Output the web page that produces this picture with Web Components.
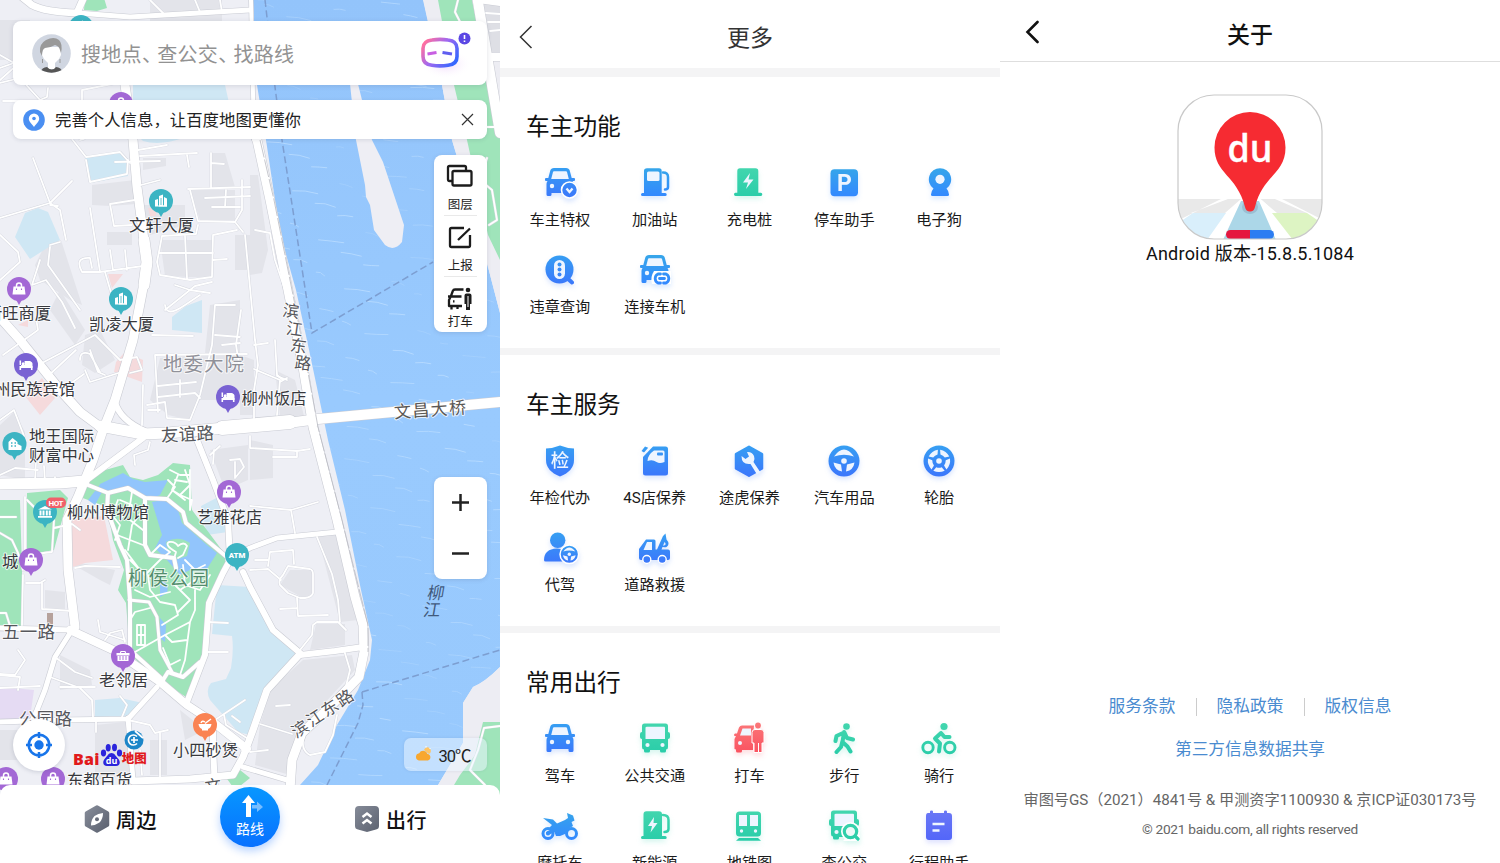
<!DOCTYPE html>
<html lang="zh-CN">
<head>
<meta charset="utf-8">
<title>百度地图</title>
<style>
html,body{margin:0;height:863px;overflow:hidden;background:#fff}
body{display:flex;width:1500px;font-family:Roboto,"Noto Sans CJK SC",sans-serif;color:#111}
</style>
</head>
<body>
<map-screen></map-screen>
<more-screen></more-screen>
<about-screen></about-screen>
<script>
class Base extends HTMLElement{
  constructor(){super();this.attachShadow({mode:'open'});}
  draw(html){this.shadowRoot.innerHTML=html;}
}

/* One line of text spread to a given advance width */
class FitText extends Base{
  connectedCallback(){
    this.draw('<style>:host{display:inline-block;white-space:nowrap}span{display:inline-block}</style><span><slot></slot></span>');
    const s=this.shadowRoot.querySelector('span'),w=+this.getAttribute('w'),n=[...this.textContent].length;
    this.style.width=w+'px';
    s.style.letterSpacing=((w-s.getBoundingClientRect().width)/n)+'px';
  }
}
customElements.define('fit-text',FitText);

/* ---------- map ---------- */
const roads=[
 [7,'M22 -3L32 5Q45 12 77 13L84 -3'],
 [5,'M78 13L130 17L250 10'],
 [9,'M120 60L125 85L133 140L137 187L144 240'],[11,'M144 240L147 262L144 285'],[9,'M144 283L133 340L115 400L103 430L93 460L78 497L67 520L68 570L75 627'],
 [9,'M-5 312L20 340L60 390L80 412L103 429'],
 [11,'M100 426L143 434L167 433L225 428'],[14,'M222 428L290 422'],[10,'M288 423L318 419L500 402'],
 [6,'M115 402Q120 420 145 431'],
 [11,'M-4 484L60 483L84 481'],[6,'M84 482L143 438'],
 [6,'M197 440L213 480L228 520L230 560L223 573L209 603L205 655L187 702'],
 [8,'M70 630L113 650L160 682L187 705L213 722L247 749'],
 [6,'M213 722L213 745L215 790'],
 [5,'M157 687L128 719L60 720L-3 722'],
 [5,'M128 718L133 780'],
 [5,'M72 630L55 657L45 690L37 710L28 730'],
 [5,'M-4 628L40 629L72 630'],
 [9,'M250 120L257 140L270 200L290 300L303 367L313 427L337 520L355 597L363 625L364 652L359 677L333 704L302 733L292 760L290 790'],
 [6,'M243 572L250 587L273 630L300 653'],
 [6,'M300 655L335 651L363 647'],[7,'M300 654L267 690L253 730L243 757L233 775L190 779L133 781'],
 [5,'M243 767L287 780'],[5,'M228 560L250 548L277 538L337 532'],
 [10,'M477 -4L500 133'],[6,'M495 -4L478 0L500 3'],[8,'M488 57L504 57'],
 [4,'M251 0L254 140'],
 [4,'M88 485L108 493L128 488L145 498L167 499L183 512L186 523L228 558'],
 [4,'M108 493L107 510L120 545L127 560L130 600L130 650L163 680'],
 [4,'M145 498L145 545L150 555L174 558L176 568'],[4,'M163 680L168 672L183 677L200 662'],
 [3,'M129 600L149 602L157 617L160 650L172 672']
];
const lanes=[
 'M0 68L14 63L0 55','M0 83L20 78L40 100L47 97L48 88','M3 101L40 101M0 80L18 64','M82 100L82 90L122 82M100 40L110 70L85 72',
 'M150 0L165 15L250 10M195 0L200 12M220 0L222 12',
 'M72 139L86 157L120 152L130 163M86 160L90 182L127 174L128 160M115 162L160 161M138 150L167 145M140 156L197 153M187 155L189 167M141 185L160 180',
 'M33 158L50 203L72 181M0 218L50 203L60 210L66 240M50 205L58 206',
 'M211 153L211 187M211 163L224 164M188 189L250 187M190 190L198 221L235 222L242 210L242 180M205 198L250 196M212 207L240 207M226 190L225 207M235 222L243 232M198 225L196 234L162 236L157 262L160 275L190 280L212 277L213 235L237 230M185 236L187 278M160 253L213 253M213 260L227 259',
 'M110 204L135 200M110 204L114 226L132 225M90 208L100 272L143 266M110 250L113 270M125 250L127 270M100 272L82 272Q74 257 90 258L92 268M105 272L112 296L118 300',
 'M0 235L18 252L20 262L0 280M50 245L60 242M40 260L32 285L46 280L62 302L75 328M50 247L48 265L80 310',
 'M3 355L38 330L36 318M48 376L76 350M42 363L95 335L120 360L137 357L142 370L130 373M80 360Q80 350 90 354L100 372M85 370L90 382L128 370M70 384L84 374M90 350L98 372L105 375',
 'M152 335L193 336M165 310L195 286L212 282M175 285L190 290L210 293M165 305Q166 318 185 305L200 295',
 'M155 355L247 354M155 355L158 412M158 397L195 393L200 398M143 385L142 425M147 405L165 402L167 418L190 420L200 395L212 345L215 305L235 305M222 345L240 343M158 386L196 382M180 380L180 397M215 335L240 337M148 410L160 410M240 370L236 345L241 310',
 'M0 420L14 410L24 436M35 482L36 460M45 482L44 466M0 475L15 468L38 470M55 482L55 477',
 'M135 465L134 455L148 450L150 442M210 455L220 446M230 460L240 459L244 467L235 478L235 462M213 464L214 450',
 'M0 517L16 517M0 533L12 540L18 553L23 570M25 497L25 570M27 500L34 507M27 555L52 552L54 520M54 528L72 524L80 530',
 'M23 575L22 625M0 613L6 613L10 626M42 583L42 609L72 611M26 583L40 583L45 580M75 568L85 566L120 567M98 620L100 632L125 640M105 640L110 633L122 630L125 642',
 'M0 675L20 677L18 690M18 650L25 660L15 675L0 674M0 688L40 686M50 677L80 688L92 700L93 717M55 657L75 672L92 678M60 687L95 687M96 720L96 732M122 717L127 705L120 696M128 720L150 725L155 733L168 730',
 'M42 750L60 750L58 732M140 750L142 775M160 780L160 733',
 'M208 622L228 623M208 652L228 652M215 720L245 700M224 715L226 725L250 740L242 750M232 716L240 722',
 'M250 506L291 510L318 502M291 510L295 533M254 418L254 390L258 365L255 340M275 340L277 375L283 380M280 382L287 378M277 415L280 380L254 369',
 'M250 436L250 448L297 451L310 449M297 451L297 457L273 457M250 570L268 569L281 580M268 566L270 552L293 550L294 564M255 560L268 560M288 566L310 569Q313 570 313 574V593Q312 597 305 598L300 598L288 593L280 585Q278 580 283 575ZM297 598L298 616L328 615M297 608L280 609M317 537L332 574L338 600L340 622M300 650L312 635L313 625L317 622L338 622L346 630M276 706L290 705M260 724L292 734M250 752L268 750M344 650L350 670L345 690',
 'M255 230L270 233L275 260L285 290M254 345L268 343M277 376L287 380M245 235L255 340',
 'M458 0L455 12L478 57L486 78M487 158L480 180L492 190L497 220L489 225M486 127L500 127M500 726L484 728L478 750L470 770L485 785',
 'M486 13L500 14M488 22L500 22M490 31L500 30',
 'M304 735Q300 750 310 755L325 752L333 735L337 715',
 'M80 140L84 139M150 130L200 135'
];
const parkLanes=[
 'M118 500L112 515L120 525L115 540M120 500L132 505L130 520L143 530M132 492L130 505L120 520M143 510L132 525L128 550M117 535L143 545M125 550L140 570L138 585M130 560L145 575L160 560M150 555L160 545L170 552L160 560',
 'M170 470L180 475L190 475M168 480L175 487L168 497M178 475L172 490L180 495L190 485L185 470M180 495L192 500L190 510M172 490L185 500M175 480L187 482M190 470L190 510',
 'M148 575L150 590L160 602L175 605L178 615L162 625M135 590L150 597L170 592M175 585L190 600L178 612M180 590L195 580M183 565L185 585L200 590L210 575M195 590L195 610L190 622L165 635L135 652M190 622L185 660L180 675M130 620L135 612L150 608M165 635L172 642L187 640M163 648L170 665L180 660M185 560L195 570L205 565',
 'M137 625L145 625L145 645L137 645ZM141 625V645M137 635H145',
 'M174 559L176 552Q164 545 169 542Q175 541 178 546Q184 541 187 546L183 555L178 558'
];
const pinArt={
 building:'<path d="M-6 5V-1l3-1v7zM-2 5V-5l4-1.5V5zM3 5V-4l3 1.500V5z"/><path d="M-2 5h8M-6 5h12" stroke="#fff"/><path d="M0 -3v7" stroke="#3cb4c3" stroke-width=".8"/>',
 bag:'<path d="M-5.500 -2.500h11l1 8h-13z"/><path d="M-2.500 -2v-1.500a2.500 2.500 0 0 1 5 0V-2" fill="none" stroke="#fff" stroke-width="1.500"/><path d="M-2.500 -.5v1.500M2.500 -.5v1.500" stroke="#a368d5" stroke-width="1.100"/>',
 bed:'<path d="M-6.500 -4.500h1.600v5.500h10v-3.500q0-1.500-1.500-1.500h-5v4h-5zm0 5.500h13v4h-1.600v-2h-9.800v2h-1.600z"/><circle cx="-2.800" cy="-1.200" r="1.500"/><path d="M-1 -3.500H4Q6.500 -3.500 6.500 -1V3H-1Z"/>',
 house:'<path d="M-6 -2l4-4 5 4v2l4 2v4h-13z"/><path d="M-3.500 -1h1.500m2 0h1.500M-3.500 2h1.500m2 0h1.500" stroke="#3cb4c3" stroke-width="1.600"/>',
 museum:'<path d="M-7 -2.500L0 -6l7 3.500zM-5.500 -1.500h2v5h-2zM-2.500 -1.500h2v5h-2zM.8 -1.500h2v5h-2zM3.700 -1.500h2v5h-2zM-7 4h14v1.700h-14z"/>',
 atm:'<text y="2.900" font-size="7.800" font-weight="900" text-anchor="middle" font-family="Roboto">ATM</text>',
 basket:'<path d="M-6.500 -3h13v2.500h-13zM-5.500 0h11v5h-11z"/><path d="M-3 0v4M0 0v4M3 0v4" stroke="#a368d5" stroke-width=".9"/><path d="M-3 -2l1-2.500h4l1 2.500" fill="none" stroke="#fff" stroke-width="1.100"/>',
 bowl:'<path d="M-6.500 -1h13q-.5 4-3.500 5v1.500h-6V4q-3-1-3.500-5z"/><path d="M0 -1.500L6 -6M-4 -2q1-3 4-1" stroke="#fff" stroke-width="1.500" fill="none"/>'
};
const pins=[[81,27,'#3cb4c3','building'],[121,104,'#a368d5','bag'],[161,201,'#3cb4c3','building'],[19,289,'#a368d5','bag'],[121,299,'#3cb4c3','building'],[26,365,'#7962d3','bed'],[228,397,'#7962d3','bed'],[14.500,444,'#3cb4c3','house'],[45,512,'#3cb4c3','museum'],[31,560,'#a368d5','bag'],[229,492,'#a368d5','bag'],[237,555,'#3cb4c3','atm'],[123,656,'#a368d5','basket'],[205,725,'#fa8353','bowl'],[6,779,'#a368d5','bag'],[53,779,'#a368d5','bag']];
/* text, left, centre y, width, size, colour, rotation */
const labels=[
 ['文轩大厦',129,225,65],['凯凌大厦',89,324,65],['新旺商厦',-14,313,65],['柳州民族宾馆',-22,389,97],['柳州饭店',241.500,398,65],
 ['地委大院',163,364,81,19.500,'#909199'],['地王国际',29,436,65],['财富中心',29,455,65],['友谊路',161,434,53,17.500,'#56575c',-3],
 ['柳州博物馆',67,511.500,82],['艺雅花店',197,517,65],['柳侯公园',128,578,81,19.500,'#538d6d'],['城',2,561,16],
 ['五一路',2,632,53,17.500,'#56575c'],['老邻居',99,680,49],['公园路',19,719,53,17.500,'#56575c'],['小四砂煲',173,749.500,65],['东都百货',67,780,65],
 ['文昌大桥',394,409.500,72,17,'#5b5855',-4]
];
const glyphs=[['滨',291,311,8],['江',294.500,329,8],['东',298.500,346,8],['路',303,363,8],['滨',300,729,-33],['江',315,718,-33],['东',330,708,-33],['路',345,698,-33],['文',213,786,-8]];
const river='M253 -2H423L442 85L452 140L470 200L488 267L500 313V667Q485 682 473 687L463 703V743L438 785V800H290L300 785L318 765L337 725L358 690L370 660L372 640L361 590L345 510L328 440L308 345L296 290L280 233L266 140L257 85Z';

class CityMap extends Base{
  connectedCallback(){
    const all=(w,c)=>roads.map(r=>`<path d="${r[1]}" stroke-width="${r[0]+w}"/>`).join('');
    let waves='';
    for(let i=0;i<230;i++){const x=258+(i*73.3)%240,y=(i*41.700)%785,l=8+(i*7)%20;waves+=`<path opacity="${.3+(i%5)*.12}" d="M${x.toFixed(1)} ${y.toFixed(1)}q${l/2} ${(i%3)-1} ${l} ${1+i%4}"/>`;}
    this.draw(`<style>:host{display:block}svg{display:block;font-family:"Noto Sans CJK SC",sans-serif}</style>
<svg width="500" height="800" viewBox="0 0 500 800" fill="none">
<defs><clipPath id="rv"><path d="${river}"/></clipPath><linearGradient id="rg" x1="0" y1="0" x2="0" y2="1"><stop stop-color="#93c4fb"/><stop offset=".5" stop-color="#99cafe"/><stop offset="1" stop-color="#98c9fd"/></linearGradient></defs>
<rect width="500" height="800" fill="#eeeff5"/>
<g fill="#e3e4ea">
<path d="M150 0H222V45H150ZM0 20H30V60H0ZM92 185L135 180L136 204L110 206L92 205ZM143 158L166 158V166L143 170ZM212 153L225 153L235 187L212 187ZM190 190H235V220L200 220ZM140 205L185 205V225L150 235ZM107 232L132 232V245H107ZM160 240H212V278L165 276ZM235 235H250V270H235ZM250 175L258 175L268 250L262 273L250 275ZM45 245L62 243L82 305L70 300L40 280L35 265Z"/>
<path d="M60 290L85 330L75 345L50 310ZM85 335L100 330L115 360L95 373L82 365ZM210 305L240 300V350L240 400L200 400L190 420L168 415L150 400L160 358L205 353ZM0 425L14 412L25 432L25 480L0 475ZM210 450L248 445V480L225 490ZM250 440L273 445L273 478L250 480ZM240 355L254 360V415H240ZM275 370L295 380L305 420L280 415Z"/>
<path d="M45 590L65 592V610L45 608ZM60 655L90 670L92 685L60 690ZM0 730H60V760H0ZM95 725L125 722L130 775L95 780ZM150 740H167V775H150ZM280 585L290 570L312 570V595L303 598ZM318 537L335 533L352 600L358 620L340 622ZM316 624L345 624V645L310 650ZM303 660L352 655L355 670L300 730L290 775L255 765L260 725L270 690ZM180 710L205 730L185 740ZM70 515L74 550L68 560ZM65 560L115 570L110 585L100 580Z"/>
</g>
<g fill="#f5dadc"><path d="M68 520L104 516L113 560L85 563L70 568ZM116 362L125 352L143 360L142 382L114 372ZM25 396L42 378L55 398L40 415ZM108 274L123 274L112 288ZM148 208L156 208V216L150 216ZM18 325L28 320V327Z"/></g>
<path d="M0 687L34 690L30 718L0 720Z" fill="#e5dbf3"/>
<g fill="#cfe7f4"><path d="M85 157L120 153L128 160V176L90 183ZM25 213L38 208L48 212L60 240L30 259L15 237ZM133 85H225L229 103H133ZM140 138H183Q160 146 143 141ZM172 317L186 306L202 300V333L172 330ZM201 506L222 495L228 532L207 535ZM217 585L250 587L275 635L298 655L265 695L250 735L238 732L210 700Q205 690 211 683L226 679L231 668Q234 650 232 636L212 634ZM95 700L120 698L143 703L125 718L95 717Z"/></g>
<g fill="#9fe4ba"><path d="M85 -2H104L107 8L97 11L84 10ZM0 500H20L22 570V628L0 628ZM27 493L60 490L68 498L54 550L27 555ZM90 480L105 470L123 465L130 477L143 480L158 475L173 463L190 465L192 510L227 557L220 580L209 603L202 660L186 697L163 682L130 655L126 603L118 590L124 570L113 540L107 507L80 497ZM225 776L240 770L250 778L235 790Z"/></g>
<g fill="#92c5fc"><path d="M100 484L123 473L133 479L145 482L168 480L160 495L148 500L128 489L110 493L98 488ZM88 500L95 491L102 492L95 505ZM152 502L163 500L177 507L182 523L207 545L217 553L205 572L190 570L180 575L167 560L155 548L162 535ZM160 580Q170 583 167 593L160 597ZM160 618L166 625L165 642L160 638Z"/><path d="M166 542q12-7 24 1l-3 13-12 4q-8-8-9-18z" fill="#9fe4ba"/></g>
<path d="${river}" fill="url(#rg)"/><g stroke="#bcdeff" stroke-width="1" clip-path="url(#rv)">${waves}</g>
<path d="M350 84L358 84L372 140L383 162L404 225L402 242Q394 252 385 245L374 230L370 205L366 197L365 185L356 140Z" fill="#eeeef4"/>
<path d="M423 0L442 85L452 140L470 200L488 267L500 313V0ZM500 667Q485 682 473 687L463 703V743L438 785V800H500Z" fill="#ededf3"/>
<path d="M438 0H472L500 134V260L488 235L467 140L454 85ZM483 722L500 722V800H445L460 775L475 755Z" fill="#9fe4ba"/>
<path d="M480 3H500V52H488Z" fill="#dedfe5"/>
<path d="M265 0L275 87L282 140L312 333L433 262M362 692L500 650M362 692L363 705L358 723L327 785" stroke="#7897c9" stroke-width="1.500" stroke-dasharray="7 3.500" opacity=".85"/>
<g stroke-linejoin="round" stroke-linecap="round">
<g stroke="#d5d7df" stroke-width="2.700">${lanes.map(d=>`<path d="${d}"/>`).join('')}</g>
<g stroke="#c9cbd3">${all(1.100)}</g>
<g stroke="#fff" stroke-width="1.800">${lanes.concat(parkLanes).map(d=>`<path d="${d}"/>`).join('')}</g>
<g stroke="#fff">${all(0)}</g></g>
<path d="M260 140L274 200L294 300L307 367L318 427L342 520L361 597L368 625L368 652" stroke="#b9bac2" stroke-width=".8" stroke-dasharray="18 2"/>
<path d="M47 613h6v13h-6z" fill="#b6a29c"/>
${pins.map(p=>`<g transform="translate(${p[0]} ${p[1]})"><path d="M-4 9L0 16L4 9z" fill="${p[2]}"/><circle r="12" fill="${p[2]}"/><g fill="#fff">${pinArt[p[3]]}</g></g>`).join('')}
<g><circle cx="134" cy="740" r="9.500" fill="#1c86c8"/><path d="M137 736.500a5 5 0 1 0 0 7M134 737v6M131 740h7M135 731l8 7" stroke="#fff" stroke-width="1.700"/><rect x="46" y="497.500" width="20" height="10.500" rx="5" fill="#f0606a"/><text x="48.500" y="505.700" font-size="8" font-weight="700" fill="#fff" textLength="15" font-family="Roboto">HOT</text></g>
<g stroke="#fff" stroke-width="2" stroke-linejoin="round" paint-order="stroke" stroke-opacity=".75" font-weight="400">
${labels.map(([t,x,y,w,s=16.300,c='#37383d',r=0])=>`<text x="${x}" y="${y+s*.37}" font-size="${s}" fill="${c}" ${t.length>1?`textLength="${w}"`:''} transform="rotate(${r} ${x+w/2} ${y})">${t}</text>`).join('')}
${glyphs.map(([t,x,y,r])=>`<text x="${x}" y="${y+6}" font-size="16.500" fill="#55565b" text-anchor="middle" transform="rotate(${r} ${x} ${y})">${t}</text>`).join('')}
</g>
<g font-size="17" fill="#41597c" text-anchor="middle"><text transform="translate(435 599) skewX(-10)">柳</text><text transform="translate(431 616) skewX(-10)">江</text></g>
</svg>`);
  }
}
customElements.define('city-map',CityMap);

class SearchBar extends Base{
  connectedCallback(){this.draw(`<style>
:host{display:flex;align-items:center;height:64px;margin:0 13px;background:#fff;border-radius:8px;box-shadow:0 1px 5px rgba(60,70,100,.16);box-sizing:border-box;padding:0 14px 0 19px;font-size:20px;color:#929292}
.q{margin-left:10px;flex:1;white-space:nowrap;letter-spacing:.3px}i{font-style:normal;font-feature-settings:"halt";margin-right:5px;display:inline-block}
svg{display:block}</style>
<svg width="39" height="39" viewBox="0 0 39 39"><defs><clipPath id="c"><circle cx="19.500" cy="19.500" r="19.300"/></clipPath></defs><g clip-path="url(#c)"><path fill="#d0d6e1" d="M0 0h39v39H0z"/><path fill="#fff" d="M11 13h17l1 8-2 4-4 4v6h-7v-6l-4-4-2-4z"/><path fill="#999" d="M8 18Q7 10 14 6q8-4 13 0 4 4 2 13l-1-3q-1-4-5-5-5 3-10 3-3 1-3 8z"/><path fill="#555" d="M8 39q2-6 7-6 5 5 9 0 5 0 7 6z"/></g><path d="M10.500 25v4M28 25v4" stroke="#999"/></svg>
<span class="q">搜地点<i>、</i>查公交<i>、</i>找路线</span>
<svg width="52" height="54" viewBox="0 0 52 54"><defs><linearGradient id="g" x1="0" y1=".2" x2="1" y2=".8"><stop stop-color="#ff6fa0"/><stop offset=".45" stop-color="#a068f0"/><stop offset="1" stop-color="#3268ff"/></linearGradient><radialGradient id="h"><stop stop-color="#f0d8fb"/><stop offset="1" stop-color="#fff" stop-opacity="0"/></radialGradient></defs><ellipse cx="25" cy="38" rx="26" ry="15" fill="url(#h)"/><path d="M12 14.500Q20 13.300 28 14.500Q37 15.500 37 23V31Q37 39 28 39.800Q20 41 12 39.800Q3 39 3 31V23Q3 15.500 12 14.500Z" transform="translate(-1 -.5)" fill="#fff" stroke="url(#g)" stroke-width="3.600"/><path d="M6.500 28l9-1.500" stroke="#c85fe2" stroke-width="3"/><path d="M21.500 26.500l9.500 1.500" stroke="#605ef0" stroke-width="3"/><circle cx="43.500" cy="12.500" r="6" fill="#5b47e4"/><path d="M43.500 9v4M43.500 14.500v1.600" stroke="#fff" stroke-width="1.600"/></svg>`);}
}
customElements.define('search-bar',SearchBar);

class NoticeBar extends Base{
  connectedCallback(){this.draw(`<style>
:host{display:flex;align-items:center;height:39px;margin:0 13px;background:#fff;border-radius:8px;box-shadow:0 1px 4px rgba(60,70,100,.14);padding:0 13px 0 10px;box-sizing:border-box;font-size:16.400px;color:#222}
.t{margin-left:10px;flex:1;margin-top:-1px}</style>
<svg width="22" height="22"><circle cx="11" cy="11" r="10.800" fill="#4a8ff2"/><path d="M11 4.500a5.200 5.200 0 0 1 5.200 5.200c0 3-3 5-5.200 8.300-2.200-3.300-5.200-5.300-5.200-8.300A5.200 5.200 0 0 1 11 4.500z" fill="#fff"/><circle cx="11" cy="9.500" r="1.800" fill="#4a8ff2"/></svg>
<span class="t"><fit-text w="246">完善个人信息，让百度地图更懂你</fit-text></span>
<svg width="13" height="13"><path d="M1 1l11 11M12 1L1 12" stroke="#333" stroke-width="1.200"/></svg>`);}
}
customElements.define('notice-bar',NoticeBar);

class MapTools extends Base{
  connectedCallback(){this.draw(`<style>
:host{display:block;width:53.500px;height:177px;background:#fff;border-radius:8px;box-shadow:0 1px 4px rgba(60,70,100,.16)}
div{height:60px;margin:0 10px;border-bottom:1px solid #e9e9e9;display:flex;flex-direction:column;align-items:center;padding-top:8px;box-sizing:content-box;height:52px;font-size:12.500px;line-height:18px;color:#222}
div:last-child{border:0}svg{display:block;height:27px;width:28px;margin-bottom:6px;flex:none}.l svg{margin-bottom:1px}
svg{fill:none;stroke:#1c1c1c;stroke-width:2.300;stroke-linejoin:round}</style>
<div><svg viewBox="0 0 28 27"><path d="M6.500 18H3.500Q2 18 2 16.500V4.500Q2 3 3.500 3H18.500Q20 3 20 4.500V7"/><rect x="6.500" y="8" width="19" height="14.500" rx="1.500"/></svg>图层</div>
<div><svg viewBox="0 0 28 27"><path d="M18 4H5.500Q4 4 4 5.500V21.500Q4 23 5.500 23H22.500Q24 23 24 21.500V11M12 16L24 4.500"/></svg>上报</div>
<div class="l"><svg viewBox="0 0 28 27"><path d="M17.500 4.500H9Q7.300 4.500 6.800 6L4.800 11.500H15.500M2 11.500H5M4.500 12L3 15V21H16M5.500 21V24.500M11.500 24V21M7 16.300h1.500"/><path fill="#1c1c1c" stroke="none" d="M18.500 10.500q0-2 2-2h3q2 0 2 2v8.500h-1.500V25h-4v-6h-1.500z"/><circle cx="22" cy="5" r="2.300" fill="#1c1c1c" stroke="none"/><path d="M22 11v11" stroke="#fff" stroke-width="1"/></svg>打车</div>`);}
}
customElements.define('map-tools',MapTools);

class ZoomControl extends Base{
  connectedCallback(){this.draw(`<style>:host{display:grid;grid-template-rows:1fr 1fr;place-items:center;width:53.500px;height:101.500px;background:#fff;border-radius:8px;box-shadow:0 1px 4px rgba(60,70,100,.16)}path{stroke:#222;stroke-width:2.500}</style>
<svg width="17" height="17"><path d="M0 8.500h17M8.500 0v17"/></svg><svg width="17" height="17"><path d="M0 8.500h17"/></svg>`);}
}
customElements.define('zoom-control',ZoomControl);

class MapFooter extends Base{
  connectedCallback(){this.draw(`<style>
:host{display:flex;align-items:flex-end;padding:0 13px 14px;box-sizing:border-box;color:#222}
.loc{width:52px;height:52px;border-radius:50%;background:#fff;box-shadow:0 1px 4px rgba(60,70,100,.2);display:grid;place-items:center}
.logo{display:flex;align-items:flex-end;margin-left:8px;margin-bottom:4px;color:#e11a1c;font-weight:700;height:28px}
.bai{font:800 16px/16px "Open Sans",sans-serif;letter-spacing:.3px}.map{font-size:12.500px;line-height:17px;font-weight:900;margin-left:-1px}
.w{margin-left:auto;width:83px;height:33px;border-radius:7px;background:rgba(235,246,255,.52);display:flex;align-items:center;justify-content:center;gap:7px;font-size:16.500px;box-shadow:0 0 3px rgba(70,90,130,.14);box-sizing:border-box;padding-right:6px}
</style>
<div class="loc"><svg width="28" height="28" viewBox="0 0 28 28" fill="none" stroke="#1875ea" stroke-width="2.500"><circle cx="14" cy="14" r="10.300"/><circle cx="14" cy="14" r="4.700" fill="#1875ea" stroke="none"/><path d="M14 1v6M14 21v6M1 14h6M21 14h6"/></svg></div>
<div class="logo"><span class="bai">Bai</span><svg width="23" height="24" viewBox="0 0 23 24" fill="#2b25dc"><ellipse cx="3.500" cy="10" rx="2.600" ry="3.400"/><ellipse cx="8.200" cy="4.700" rx="2.500" ry="3.700"/><ellipse cx="14.500" cy="4.500" rx="2.500" ry="3.700"/><ellipse cx="19.500" cy="10" rx="2.600" ry="3.400"/><path d="M11.500 10c3 0 4 3 6.500 5.500 3 3 2 7.500-2 7.500H7c-4 0-5-4.500-2-7.500C7.500 13 8.500 10 11.500 10z"/><text x="11.500" y="20.500" font-size="9" text-anchor="middle" fill="#fff" font-family="Open Sans" font-weight="700">du</text></svg><span class="map">地图</span></div>
<div class="w"><svg width="17" height="17" viewBox="0 0 17 17"><path d="M9 4a3.500 3.500 0 1 1 5 4" fill="#ffc566"/><path d="M4 14.500a3.700 3.700 0 0 1 .2-7.300A4.500 4.500 0 0 1 12.500 8a3.300 3.300 0 0 1 .3 6.500z" fill="#f8a72f"/><path d="M11 0v1.500M15.500 2l-1 1" stroke="#fff"/></svg><fit-text w="32">30℃</fit-text></div>`);}
}
customElements.define('map-footer',MapFooter);

class TabBar extends Base{
  connectedCallback(){this.draw(`<style>
:host{display:grid;grid-template-columns:190px 120px 190px;height:78px;background:#fff;border-radius:10px 10px 0 0;font-size:20px;font-weight:500;color:#111}
.t{display:flex;align-items:center;gap:6px;height:68px}.a{padding-left:84px}.b{padding-left:44px}
.go{justify-self:center;margin-top:2px;width:60px;height:60px;border-radius:50%;background:linear-gradient(#0797ff,#0870ff);box-shadow:0 4px 8px rgba(20,110,255,.3);color:#fff;font-size:14px;font-weight:400;display:flex;flex-direction:column;align-items:center;line-height:18px}
svg{flex:none}.go svg{margin-top:8px;margin-bottom:2px}</style>
<div class="t a"><svg width="26" height="28" viewBox="0 0 26 28"><defs><linearGradient id="n" x2="1" y2="1"><stop stop-color="#858b98"/><stop offset="1" stop-color="#5c6270"/></linearGradient></defs><path d="M13 2L23.500 8V20L13 26L2.500 20V8Z" fill="url(#n)" stroke="url(#n)" stroke-width="3.500" stroke-linejoin="round"/><path d="M19 8q0 6-3.500 9.500Q12 20 7 20.500q0-6 3.500-9.500Q14 8.500 19 8z" fill="#fff"/><circle cx="13" cy="14.200" r="2" fill="#686e7b"/></svg><fit-text w="41">周边</fit-text></div>
<div class="go"><svg width="28" height="23" viewBox="0 0 28 23"><path d="M16 10h5V6.500L27 12l-6 5v-3.500h-5z" fill="#76bdff"/><path d="M12.500 0l6.500 8H15v14h-5V8H6z" fill="#fff"/></svg><span>路线</span></div>
<div class="t b"><svg width="26" height="28" viewBox="0 0 26 28"><defs><linearGradient id="n" x2="1" y2="1"><stop stop-color="#858b98"/><stop offset="1" stop-color="#5c6270"/></linearGradient></defs><path d="M5 1h16q4 0 4 4v16q0 3-3 3.500l-9 2.500-9-2.500q-3-.5-3-3.500V5q0-4 4-4z" fill="url(#n)"/><path d="M8.500 12L13 8.500 17.500 12M8.500 18.500L13 15l4.500 3.500" fill="none" stroke="#fff" stroke-width="2.500"/></svg><fit-text w="41">出行</fit-text></div>`);}
}
customElements.define('tab-bar',TabBar);

class MapScreen extends Base{
  connectedCallback(){this.draw(`<style>
:host{display:flex;flex-direction:column;position:relative;width:500px;height:863px;flex:none;overflow:hidden;box-sizing:border-box;padding-top:21px}
city-map{position:absolute;left:0;top:0}
search-bar,notice-bar,map-tools,zoom-control,map-footer,tab-bar{position:relative;flex:none}
notice-bar{margin-top:15px}map-tools{align-self:flex-end;margin:16px 13px 0 0}zoom-control{align-self:flex-end;margin:145px 13px auto 0}</style>
<city-map></city-map><search-bar></search-bar><notice-bar></notice-bar><map-tools></map-tools><zoom-control></zoom-control><map-footer></map-footer><tab-bar></tab-bar>`);}
}
customElements.define('map-screen',MapScreen);

/* ---------- service icons, 36 x 36 ---------- */
const car='<path d="M12 3h12q3 0 3.700 2.600L29.700 13H32q1 0 1 1v1q0 1-1 1.100h-1.500q1 1.400 1 3V29.500q0 1.500-1.500 1.500h-2q-1.500 0-1.500-1.500V28H9.500v1.500Q9.500 31 8 31H6q-1.500 0-1.500-1.500V19q0-1.700 1-3H4q-1-.1-1-1.100v-1q0-1 1-1h2.300L8.300 5.600Q9 3 12 3z"/><path class="h" d="M12 6.200h12q.8 0 1 .8l1.800 7H9.200L11 7q.2-.8 1-.8z"/><circle class="h" cx="10" cy="21" r="2.200"/>';
const spoke='M12.300 8.300q5.700-2.800 11.400 0l-3 3.500q-2.700-1-5.400 0z';
const art={
 perk:car+'<circle cx="27.500" cy="25" r="8" stroke="#fff" stroke-width="1.600"/><path class="s" d="M24.500 23.500l3 3.500 3-3.500"/>',
 fuel:'<path d="M10 3.300h12q2.700 0 2.700 2.700v22h3.500q1.500 0 1.500 1.500T28.200 31H5.500Q4 31 4 29.500T5.500 28H7V6q0-2.700 3-2.700z"/><rect class="h" x="10" y="6.500" width="12.500" height="9.500" rx="1.500"/><path class="l" d="M26 7.500q5 0 5 4.500v10q0 2.500-3 2.500"/>',
 charge:'<path d="M9 3.300h15.500q2.800 0 2.800 2.700v21.700h2.500q1.500 0 1.500 1.600T29.800 31H4.500Q3 31 3 29.300t1.500-1.600h1.800V6q0-2.700 2.700-2.700z"/><path class="h" d="M19 8l-7 9.500h5L15 24l7.500-9.500h-5z"/>',
 park:'<rect x="4.500" y="4.300" width="27.500" height="27" rx="4"/><text class="h" x="18.500" y="26" text-anchor="middle" font-size="23" font-weight="700">P</text>',
 camera:'<path d="M19 3.200a11.200 11.200 0 0 1 6.500 20.300q2 2 2.500 6 .2 1.500-1.500 1.500h-15q-1.700 0-1.500-1.500.5-4 2.500-6A11.200 11.200 0 0 1 19 3.200z"/><circle class="h" cx="19" cy="14.300" r="4.600"/>',
 query:'<circle cx="17.500" cy="17.500" r="14"/><path class="l" d="M24 25l6 5.500" stroke-width="4"/><rect class="h" x="12" y="8" width="11" height="19" rx="5.500"/><circle cx="17.500" cy="12.500" r="2"/><circle cx="17.500" cy="17.500" r="2"/><circle cx="17.500" cy="22.500" r="2"/>',
 link:car+'<path d="M17 19h17v13H15q-2-7 2-13z" style="fill:#fff"/><path d="M23.500 22h-2.500a5 5 0 0 0 0 9h2.500M26.500 22h2.500a5 5 0 0 1 0 9h-2.500M22.500 26.500h5" class="l" stroke-width="2.800"/>',
 inspect:'<path d="M18 2.500q6 2.500 14 3V17q0 11-14 16.500Q4 28 4 17V5.500q8-.5 14-3z"/><text class="h" x="18" y="24" text-anchor="middle" font-size="18.500" font-weight="500">检</text>',
 door:'<path d="M16 3.500h12.500q2.500 0 2.500 2.500v24q0 2.500-2.500 2.500h-20Q6 32.500 6 30V14zM4.500 8L8 3.500l3.200 1.200L7 9.500z"/><path class="h" d="M17 7.500h9q1.500 0 1.500 1.500v10q-5 2-8 0-4-3-9-1 0-6 6.500-10.500z"/><rect x="20" y="9.500" width="6" height="3" rx="1"/>',
 wrench:'<path d="M18 3.800L31 11V25.500L18 32.700 5 25.500V11Z" stroke-width="2.500" stroke="url(#g)" stroke-linejoin="round"/><path class="h" d="M10.500 13l4 3 3.500-2.500-2-4.500q5-.5 7 4 1.200 3-.5 6l7 10.500-3.500 2-6.500-10.500q-9 1-9-8z"/>',
 wheel:'<circle cx="18" cy="18" r="15.500"/><path class="h" d="M8 13.500Q18-.5 28 13.500Q18 10 8 13.500zM7.500 19.500l7.500 2 1 7q-7.500-1.500-8.500-9zM28.500 19.500l-7.500 2-1 7q7.500-1.500 8.500-9z"/><circle class="h" cx="18" cy="18" r="2.800"/>',
 tyre:'<circle cx="18" cy="18" r="15.500"/><g class="h"><circle cx="18" cy="18" r="2.800"/>'+[36,108,180,252,324].map(a=>`<path d="${spoke}" transform="rotate(${a} 18 18)"/>`).join('')+'</g>',
 driver:'<circle cx="15.700" cy="10.300" r="7.700"/><path d="M2 30q0-11 13-11.500 9 0 10 13H3.500Q2 31.500 2 30z"/><g transform="translate(16.500 13.500) scale(.6)"><circle cx="18" cy="18" r="15.500" stroke="#fff" stroke-width="2.500"/><path class="h" d="M8 13.500Q18-.5 28 13.500Q18 10 8 13.500zM7.500 19.500l7.500 2 1 7q-7.500-1.500-8.500-9zM28.500 19.500l-7.500 2-1 7q7.500-1.500 8.500-9z"/><circle class="h" cx="18" cy="18" r="2.800"/></g>',
 tow:'<path d="M9 9.500h8q1.500 0 1.500 1.500v8.500h1.500L26 6l2.500-2.500 1 6q4 4.500 0 7.500-3 1-5-1l2.500-.5q3-1 .5-3.500l-3 7.500H31q2 0 2 2V28q0 2-2 2H4q-2 0-2-2v-9z"/><path class="h" d="M10 12h5v8H6.500z"/><circle cx="9.800" cy="29.500" r="4" stroke="#fff" stroke-width="1.400"/><circle cx="25.200" cy="29.500" r="4" stroke="#fff" stroke-width="1.400"/>',
 car:car+'<circle class="h" cx="26" cy="21" r="2.200"/>',
 bus:'<path d="M7.500 2.500h21q2.500 0 2.500 2.500v6q2 0 2 2v3q0 2-2 2v8q0 2.500-2 2.500V30q0 1.500-1.500 1.500h-3Q23 31.500 23 30v-1H13v1q0 1.500-1.500 1.500h-3Q7 31.500 7 30v-1.500q-2 0-2-2.500v-8q-2 0-2-2v-3q0-2 2-2V5q0-2.500 2.500-2.500z"/><path class="h" d="M10 5.700h17q1 0 1 1V18H8.500V6.700q0-1 1.500-1z"/><circle class="h" cx="10.500" cy="24" r="2.100"/><circle class="h" cx="25.500" cy="24" r="2.100"/>',
 taxi:'<path d="M11 4.500h12L22 16v13H11v1q0 1.500-1.500 1.500h-3Q5 31.500 5 30v-1.500L3.500 28V18l1.500-3H4q-1 0-1-1t1-1.500h2L8 6.500q1-2 3-2z"/><path class="h" d="M11.500 7.500H20v7H9z"/><circle class="h" cx="9" cy="22" r="2"/><circle cx="27" cy="4.500" r="2.900"/><path stroke="#fff" d="M24 8.500h6q3 0 3 3V22h-2v9.500h-3.500V22v9.500H23V22h-2v-10.500q0-3 3-3z"/>',
 walk:'<circle cx="20.500" cy="5.500" r="3.300"/><path class="l" d="M18 11.500L10.500 15 9.500 20M18.500 11.500L21 17l6 1.500M18 11L16.500 21l5 4.500 3 5M16.500 20L15 26l-4.500 5" stroke-width="4"/>',
 bike:'<g class="l"><circle cx="7" cy="26.500" r="5.200" stroke-width="2.900"/><circle cx="28.800" cy="26.500" r="5.200" stroke-width="2.900"/><path d="M20 12l-6 5.500 5 5-1 8M20 12l3.500 4h5" stroke-width="4"/></g><circle cx="23" cy="5.500" r="3.600"/>',
 moto:'<path d="M1 10l10 1.500 4 4 8-3.500 3-2-1-5 6 2.500 1.500 5-3 1.500L31 18l-5 3-3 5-5 2h-4l-2-5-5-3 3-3z"/><g class="l" stroke-width="3"><circle cx="6" cy="25.500" r="5"/><circle cx="29.500" cy="25.500" r="5"/></g><circle cx="6" cy="25.500" r="2"/><path d="M6 25l11-5" class="l" stroke-width="4"/>',
 metro:'<rect x="5" y="3.500" width="25" height="25" rx="3.500"/><path class="h" d="M8 7h8v11H8zM19 7h8v11h-8z"/><circle class="h" cx="10.500" cy="23" r="1.700"/><circle class="h" cx="24.500" cy="23" r="1.700"/><path d="M8 30h19l3 2.800H5z"/>',
 plan:'<path d="M7 5h2V3.500q0-1 1.500-1T12 3.500V5h11V3.500q0-1 1.500-1t1.500 1V5h2q3 0 3 3v21q0 3-3 3H8q-3 0-3-3V8q0-3 2-3z"/><path class="s" d="M11.500 16h12M11.500 22.500h7" stroke-width="2.600"/>'
};
art.power='<path d="M9.500 3.300h12.500q3 0 3 3V28h3.200q1.500 0 1.500 1.500T28.200 31H5.500Q4 31 4 29.500T5.500 28H6.500V6.300q0-3 3-3z"/><path class="l" d="M26 7q5.500 0 5.500 5v9q0 3-4 3"/><path class="h" d="M17 9l-6 9h4l-1.500 6.500 7-9.500h-4z"/>';
art.busfind=art.bus.replace('<circle class="h" cx="25.500" cy="24" r="2.100"/>','')+'<circle cx="24.500" cy="23.500" r="6.500" stroke="#fff" stroke-width="6"/><path d="M22 27h12v6H17z" style="fill:#fff"/><circle cx="24.500" cy="23.500" r="6.200" style="stroke-width:3.200;stroke:url(#g);fill:#eef9f8"/><path class="l" d="M29.500 28.500l2.500 2.500" stroke-width="3.200"/>';
const tone={blue:['#36a0f2','#3b78fb'],cyan:['#36a7e9','#3388ff'],green:['#43d6ae','#2acda9'],red:['#fb7779','#fa5260'],violet:['#6b78f5','#5366f9']};

class ServiceItem extends Base{
  connectedCallback(){
    const [a,b]=tone[this.getAttribute('tone')||'blue'];
    this.draw(`<style>:host{display:flex;flex-direction:column;align-items:center;height:87px;box-sizing:border-box;padding-top:3px;font-size:15.200px;line-height:22px;color:#1a1a1a;white-space:nowrap}
svg{display:block;overflow:visible;filter:drop-shadow(0 3px 2.500px ${b}30);margin-bottom:8px;fill:url(#g);flex:none}.h{fill:#eef5ff}.s{fill:none;stroke:#eef5ff;stroke-width:2.300}.l{fill:none;stroke:url(#g);stroke-linecap:round;stroke-linejoin:round}.l:not([stroke-width]){stroke-width:2.500}</style>
<svg width="36" height="36" viewBox="0 0 36 36"><defs><linearGradient id="g" gradientUnits="userSpaceOnUse" x1="0" y1="2" x2="0" y2="32"><stop stop-color="${a}"/><stop offset="1" stop-color="${b}"/></linearGradient></defs>${art[this.getAttribute('icon')]}</svg><span><slot></slot></span>`);
  }
}
customElements.define('service-item',ServiceItem);

class ServiceSection extends Base{
  connectedCallback(){this.draw(`<style>
:host{display:block;height:278px;box-sizing:border-box;border-bottom:7.500px solid #f4f4f5;padding:32px 13px 0 12.500px;flex:none}
h2{margin:0 0 17px 13.500px;font-weight:400;font-size:23.700px;line-height:36px;color:#111}
.g{display:grid;grid-template-columns:repeat(5,94.800px)}</style><h2>${this.getAttribute('heading')}</h2><div class="g"><slot></slot></div>`);}
}
customElements.define('service-section',ServiceSection);

class MoreScreen extends Base{
  connectedCallback(){
    const item=([n,i,t='blue'])=>`<service-item icon="${i}" tone="${t}">${n}</service-item>`;
    const sec=(h,l)=>`<service-section heading="${h}">${l.map(item).join('')}</service-section>`;
    this.draw(`<style>:host{display:flex;flex-direction:column;width:500px;height:863px;flex:none;overflow:hidden;background:#fff}
header{height:77px;box-sizing:border-box;border-bottom:9px solid #f4f4f5;display:grid;grid-template-columns:60px 1fr 60px;align-items:center;text-align:center;font-size:23px;color:#333;padding-top:4px;flex:none}svg{margin:1px 0 0 19px}</style>
<header><svg width="14" height="24"><path d="M12.500 1L1.500 12l11 11" fill="none" stroke="#333" stroke-width="1.500"/></svg><span>更多</span></header>`+
    sec('车主功能',[['车主特权','perk'],['加油站','fuel','cyan'],['充电桩','charge','green'],['停车助手','park','cyan'],['电子狗','camera','cyan'],['违章查询','query'],['连接车机','link','cyan']])+
    sec('车主服务',[['年检代办','inspect'],['4S店保养','door'],['途虎保养','wrench'],['汽车用品','wheel'],['轮胎','tyre'],['代驾','driver'],['道路救援','tow']])+
    sec('常用出行',[['驾车','car'],['公共交通','bus','green'],['打车','taxi','red'],['步行','walk','green'],['骑行','bike','green'],['摩托车','moto','cyan'],['新能源','power','green'],['地铁图','metro','green'],['查公交','busfind','green'],['行程助手','plan','violet']]));
  }
}
customElements.define('more-screen',MoreScreen);

/* ---------- about ---------- */
class AppLogo extends Base{
  connectedCallback(){this.draw(`<style>:host{display:block}svg{display:block}</style>
<svg width="146" height="146" viewBox="0 0 146 146"><defs><clipPath id="r"><rect x="1" y="1" width="144" height="144" rx="36"/></clipPath></defs>
<g clip-path="url(#r)"><path fill="#fff" d="M0 0h146v146H0z"/><path d="M0 105h146v41H0z" fill="#e9e9e9"/>
<path d="M0 127L44 105H51L14 119H48L64 105H84L100 119H130L98 105H105L146 126V146H0Z" fill="#fff"/><path d="M30 117L52 105H62L48 117ZM84 105H96L118 117H98Z" fill="#e9e9e9"/>
<path d="M16 119H49L30 146H0V130Z" fill="#d9effb"/><path d="M95 119H130L146 130V146H116Z" fill="#ddf4c3"/><path d="M64 107H82L99 146H46Z" fill="#acd7e8"/><ellipse cx="73" cy="113" rx="8" ry="7" fill="#9abed2"/></g>
<path d="M73 18A35.500 35.500 0 0 1 108.500 53.500C108.500 80 86 81 78 113Q77 117.500 73 117.500T68 113C60 81 37.500 80 37.500 53.500A35.500 35.500 0 0 1 73 18Z" fill="#f62b32"/>
<text x="73" y="68" text-anchor="middle" font-family="Open Sans" font-weight="600" font-size="37" fill="#fff" stroke="#fff" stroke-width=".3" textLength="45" lengthAdjust="spacingAndGlyphs">du</text>
<path d="M53.500 136H73V145H53.500a4.500 4.500 0 0 1 0-9z" fill="#e5173f"/><path d="M73 136H92.500a4.500 4.500 0 0 1 0 9H73z" fill="#2c7df2"/>
<rect x="1" y="1" width="144" height="144" rx="36" fill="none" stroke="#c9c9c9" stroke-width="1.200"/></svg>`);}
}
customElements.define('app-logo',AppLogo);

class AboutScreen extends Base{
  connectedCallback(){this.draw(`<style>
:host{display:flex;flex-direction:column;align-items:center;width:500px;height:863px;flex:none;background:#fff;overflow:hidden}
header{width:500px;height:62px;box-sizing:border-box;border-bottom:1px solid #dedede;display:grid;grid-template-columns:60px 1fr 60px;align-items:center;text-align:center;font-size:23px;font-weight:500;color:#111;padding-top:5px}header svg{margin:-2px 0 0 25px}
app-logo{margin-top:32px}.v{font-size:18px;line-height:26px;margin-top:1px;color:#111}
.links{margin-top:auto;display:flex;align-items:center;color:#4a8bd0;font-size:16.700px;line-height:24px}.links i{width:1px;height:18px;background:#ccc;margin:0 20px}
.third{color:#4a8bd0;font-size:16.700px;line-height:24px;margin-top:19px}.reg{color:#666;font-size:15.200px;line-height:22px;margin-top:27px}.copy{color:#666;font-size:13.700px;line-height:20px;margin:8px 0 24px}</style>
<header><svg width="14" height="24"><path d="M12.500 2L2.500 12l10 10" fill="none" stroke="#111" stroke-width="2.600" stroke-linecap="round"/></svg><span>关于</span></header>
<app-logo></app-logo><div class="v"><fit-text w="208">Android 版本-15.8.5.1084</fit-text></div>
<div class="links"><fit-text w="67">服务条款</fit-text><i></i><fit-text w="67">隐私政策</fit-text><i></i><fit-text w="67">版权信息</fit-text></div>
<div class="third"><fit-text w="150">第三方信息数据共享</fit-text></div>
<div class="reg"><fit-text w="453">审图号GS（2021）4841号 &amp; 甲测资字1100930 &amp; 京ICP证030173号</fit-text></div>
<div class="copy"><fit-text w="216">© 2021 baidu.com, all rights reserved</fit-text></div>`);}
}
customElements.define('about-screen',AboutScreen);
</script>
</body>
</html>
